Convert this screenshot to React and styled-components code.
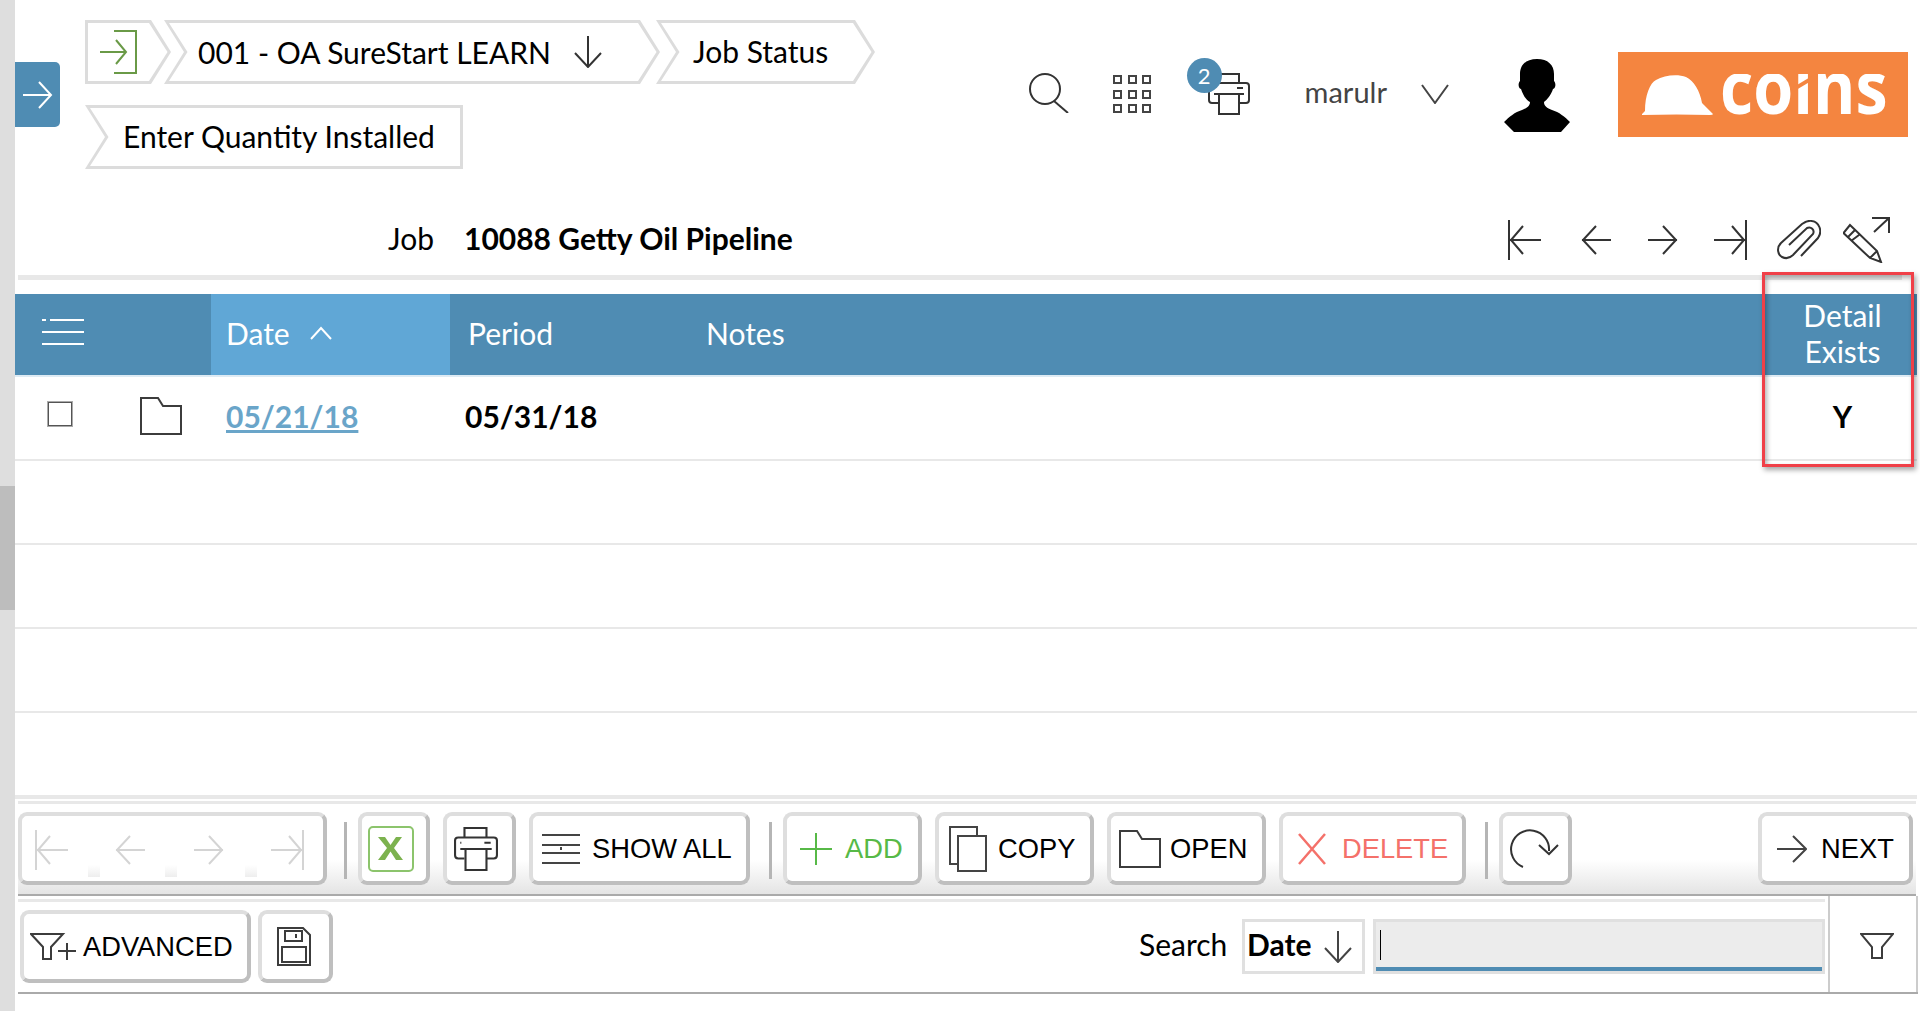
import React from 'react';
import styled, { createGlobalStyle, css } from 'styled-components';

const Global = createGlobalStyle`
  html, body { margin: 0; padding: 0; background: #fff; overflow: hidden; }
  body { font-family: Lato, "Open Sans", sans-serif; color: #000; }
  * { box-sizing: border-box; }
`;

const Page = styled.div`
  position: relative;
  width: 1920px;
  height: 1011px;
  padding-left: 15px;
  overflow: hidden;
`;

const Scrollbar = styled.div`
  position: absolute;
  left: 0;
  top: 0;
  bottom: 0;
  width: 15px;
  background: #dedede;
  &::after {
    content: '';
    position: absolute;
    left: 0;
    right: 0;
    top: 486px;
    height: 124px;
    background: #bdbdbd;
  }
`;

const SideTab = styled.div`
  position: absolute;
  left: 15px;
  top: 62px;
  width: 45px;
  height: 65px;
  background: #4f8cb3;
  border-radius: 0 5px 5px 0;
  display: flex;
  align-items: center;
  justify-content: center;
`;

const Header = styled.header`
  height: 160px;
  padding: 20px 12px 0 70px;
  display: flex;
  justify-content: space-between;
`;

const Crumbs = styled.nav`
  width: 820px;
  display: flex;
  flex-wrap: wrap;
  align-content: flex-start;
  row-gap: 21px;
`;

const shapes = {
  first: ['0 0, calc(100% - 20px) 0, 100% 50%, calc(100% - 20px) 100%, 0 100%', '3px 3px, calc(100% - 22px) 3px, calc(100% - 3.5px) 50%, calc(100% - 22px) calc(100% - 3px), 3px calc(100% - 3px)'],
  middle: ['0 0, calc(100% - 20px) 0, 100% 50%, calc(100% - 20px) 100%, 0 100%, 20px 50%', '5px 3px, calc(100% - 22px) 3px, calc(100% - 3.5px) 50%, calc(100% - 22px) calc(100% - 3px), 5px calc(100% - 3px), 23.5px 50%'],
  last: ['0 0, 100% 0, 100% 100%, 0 100%, 20px 50%', '5px 3px, calc(100% - 3px) 3px, calc(100% - 3px) calc(100% - 3px), 5px calc(100% - 3px), 23.5px 50%'],
};

const Crumb = styled.div`
  position: relative;
  height: 64px;
  width: ${(p) => p.$w}px;
  margin-left: ${(p) => p.$ml || 0}px;
  padding-left: ${(p) => p.$pl}px;
  padding-bottom: ${(p) => p.$pb || 0}px;
  display: flex;
  align-items: center;
  font-size: 30px;
  isolation: isolate;
  white-space: nowrap;
  &::before, &::after {
    content: '';
    position: absolute;
    inset: 0;
    z-index: -1;
  }
  &::before {
    background: #dcdcdc;
    clip-path: polygon(${(p) => shapes[p.$shape][0]});
  }
  &::after {
    background: #fff;
    clip-path: polygon(${(p) => shapes[p.$shape][1]});
  }
  svg { margin-left: ${(p) => p.$gap || 0}px; }
`;

const UserArea = styled.div`
  display: flex;
  align-items: flex-start;
  position: relative;
  height: 120px;
`;

const IconSlot = styled.div`
  display: flex;
  position: relative;
  margin-left: ${(p) => p.$ml}px;
  margin-top: ${(p) => p.$mt}px;
`;

const Badge = styled.span`
  position: absolute;
  left: -21px;
  top: -15px;
  width: 35px;
  height: 35px;
  border-radius: 50%;
  background: #4f8cb3;
  color: #fff;
  font-size: 22px;
  display: flex;
  align-items: center;
  justify-content: center;
`;

const UserName = styled.span`
  margin: 52px 0 0 55px;
  font-size: 29px;
  line-height: 40px;
  color: #444;
`;

const Logo = styled.div`
  width: 290px;
  height: 85px;
  margin: 32px 0 0 48px;
  background: #f48540;
  display: flex;
  align-items: center;
  padding-left: 24px;
`;

const LogoMark = styled.span`
  display: flex;
  margin-top: 1px;
`;

const LogoText = styled.span`
  position: relative;
  font-family: "Open Sans", sans-serif;
  font-size: 73px;
  font-weight: 700;
  color: #fff;
  line-height: 85px;
  margin: -18px 0 0 6px;
  transform: scaleX(0.885);
  transform-origin: left;
  clip-path: inset(31px 0 0 0);
  &::after {
    content: '';
    position: absolute;
    left: 80px;
    top: 38px;
    width: 30px;
    height: 4px;
    background: #f48540;
    transform: rotate(-28deg);
  }
`;

const JobRow = styled.div`
  height: 120px;
  margin: 0 18px 0 3px;
  padding-top: 40px;
  border-bottom: 5px solid #e8e8e8;
  display: flex;
  align-items: center;
  font-size: 30px;
`;

const JobLabel = styled.span`
  margin-left: 370px;
  width: 76px;
`;

const JobValue = styled.strong`
  font-weight: 700;
`;

const RecordIcons = styled.div`
  margin-left: auto;
  margin-right: 12px;
  margin-top: 4px;
  display: flex;
  align-items: center;
`;

const RecordSlot = styled.span`
  display: flex;
  margin-left: ${(p) => p.$ml || 0}px;
`;

const Table = styled.div`
  margin-top: 14px;
  width: 1902px;
`;

const columns = '196px 239px 240px 1fr 151px';

const HeadRow = styled.div`
  height: 81px;
  background: #4f8cb3;
  display: grid;
  grid-template-columns: ${columns};
  color: #fff;
  font-size: 30px;
`;

const HeadCell = styled.div`
  display: flex;
  align-items: center;
  padding-left: ${(p) => p.$pl || 0}px;
  padding-bottom: 4px;
  background: ${(p) => (p.$active ? '#60a7d6' : 'transparent')};
  ${(p) => p.$center && css`
    justify-content: center;
    padding-left: 2px;
    text-align: center;
    line-height: 36px;
  `}
  svg { margin-left: ${(p) => p.$iconGap || 0}px; }
`;

const BodyRow = styled.div`
  height: ${(p) => (p.$first || p.$last ? 86 : 84)}px;
  border-top: ${(p) => (p.$first ? '2px solid #deebf4' : '0')};
  border-bottom: ${(p) => (p.$last ? 4 : 2)}px solid #e8e8e8;
  padding-bottom: 5px;
  display: grid;
  grid-template-columns: ${columns};
  font-size: 30px;
  font-weight: 700;
  align-items: center;
`;

const SelectCell = styled.div`
  display: flex;
  align-items: center;
  padding-left: 32px;
  gap: 67px;
`;

const Check = styled.span`
  width: 26px;
  height: 26px;
  border: 2px solid #555;
  outline: 1px solid #aaa;
  outline-offset: -1px;
  margin-top: -4px;
`;

const DateLink = styled.a`
  color: #6aa5c9;
  text-decoration: underline;
  padding-left: 15px;
`;

const PeriodValue = styled.span`
  padding-left: 15px;
`;

const CenterValue = styled.span`
  grid-column: 5;
  padding-left: 2px;
  text-align: center;
`;

const Toolbar = styled.div`
  margin: 2px 4px 0 3px;
  border-top: 3px solid #e8e8e8;
  height: 95px;
  padding: 8px 3px 0 0;
  border-bottom: 2px solid #aaa;
  background: linear-gradient(#fff 0, #fff 56px, #e4e4e4 100%);
  display: flex;
  align-items: flex-start;
  gap: 13px;
`;

const Button = styled.button`
  height: 73px;
  width: ${(p) => p.$w}px;
  margin-left: ${(p) => p.$ml || 0}px;
  padding: 0 ${(p) => p.$pr || 0}px 0 ${(p) => p.$pl || 0}px;
  background: #fff;
  border: 4px solid #dedede;
  border-right-color: #bfbfbf;
  border-bottom-color: #bfbfbf;
  border-radius: 9px;
  font-family: "Liberation Sans", Arial, sans-serif;
  font-size: 27.3px;
  color: ${(p) => p.$color || '#000'};
  display: flex;
  align-items: center;
  justify-content: ${(p) => (p.$pl ? 'flex-start' : 'center')};
  gap: ${(p) => p.$gap || 0}px;
  white-space: nowrap;
`;

const NavGroup = styled(Button)`
  justify-content: space-between;
  padding: 3px 19px 0 13px;
  background-color: #fff;
  background-image:
    linear-gradient(#fff, #eee),
    linear-gradient(#fff, #eee),
    linear-gradient(#fff, #eee);
  background-size: 12px 12px;
  background-repeat: no-repeat;
  background-position: 66px 49px, 143px 49px, 223px 49px;
`;

const Divider = styled.span`
  width: 3px;
  height: 57px;
  background: #b5b5b5;
  margin: 10px -2px 0 ${(p) => p.$ml}px;
`;

const SearchBar = styled.div`
  margin: 0 2px 0 3px;
  height: 98px;
  border-bottom: 2px solid #aaa;
  display: flex;
`;

const SearchMain = styled.div`
  width: 1807px;
  margin-top: 3px;
  border-top: 3px solid #e8e8e8;
  display: flex;
  align-items: flex-start;
  padding: 8px 0 0 2px;
  gap: 7px;
`;

const SearchLabel = styled.span`
  font-size: 30px;
  margin: 16px 0 0 auto;
  width: 96px;
`;

const SelectBox = styled.div`
  width: 123px;
  height: 55px;
  margin-top: 9px;
  border: 3px solid #e0e0e0;
  display: flex;
  align-items: center;
  font-size: 30px;
  font-weight: 700;
  padding: 0 0 5px 2px;
  gap: 11px;
  svg { margin-top: 5px; }
`;

const SearchInput = styled.div`
  width: 452px;
  height: 55px;
  margin: 9px 0 0 1px;
  background: #ececec;
  border: 3px solid #e0e0e0;
  position: relative;
  box-shadow: inset 0 -4px 0 #4f8cb3;
  &::before {
    content: '';
    position: absolute;
    left: 4px;
    top: 8px;
    width: 1px;
    height: 30px;
    background: #000;
  }
`;

const FilterCell = styled.div`
  width: 90px;
  margin-left: 3px;
  padding: 3px 0 0 8px;
  border-left: 2px solid #ccc;
  border-right: 2px solid #ccc;
  display: flex;
  align-items: center;
  justify-content: center;
`;

const Highlight = styled.div`
  position: absolute;
  left: 1762px;
  top: 272px;
  width: 152px;
  height: 195px;
  border: 3px solid #f04048;
  box-shadow: 2px 3px 5px rgba(0, 0, 0, 0.35), inset 2px 3px 5px rgba(0, 0, 0, 0.3);
  pointer-events: none;
`;

const Line = ({ w = 40, h = 40, children, color = '#333', sw = 2 }) => (
  <svg width={w} height={h} viewBox={`0 0 ${w} ${h}`} fill="none" stroke={color} strokeWidth={sw}>
    {children}
  </svg>
);

const FirstIcon = ({ color, w = 33, h = 40 }) => (
  <Line w={w} h={h} color={color}>
    <path d={`M1 0V${h}M2 ${h / 2}H${w}M15 ${h / 2 - 14}L3 ${h / 2}L15 ${h / 2 + 14}`} />
  </Line>
);
const PrevIcon = ({ color }) => (
  <Line w={32} h={30} color={color}>
    <path d="M2 15H31M16 1L3 15L16 29" />
  </Line>
);
const NextIcon = ({ color }) => (
  <Line w={32} h={30} color={color}>
    <path d="M1 15H30M16 1L29 15L16 29" />
  </Line>
);
const LastIcon = ({ color, w = 33, h = 40 }) => (
  <Line w={w} h={h} color={color}>
    <path d={`M${w - 1} 0V${h}M0 ${h / 2}H${w - 2}M${w - 15} ${h / 2 - 14}L${w - 3} ${h / 2}L${w - 15} ${h / 2 + 14}`} />
  </Line>
);

const PrinterIcon = ({ w = 42, h = 42 }) => (
  <svg width={w} height={h} viewBox="0 0 42 42" fill="none" stroke="#333" strokeWidth="2">
    <path d="M10 10V1H31V10" />
    <path d="M10 30H4Q1 30 1 27V13Q1 10 4 10H38Q41 10 41 13V27Q41 30 38 30H31" />
    <path d="M6 21H36M11 21V41H31V21" />
    <path d="M29 15H35M6 15H7" />
  </svg>
);

const FolderIcon = ({ w = 42, h = 38 }) => (
  <svg width={w} height={h} viewBox="0 0 42 38" fill="none" stroke="#3c3c3c" strokeWidth="2">
    <path d="M1 1H18L23 9H41V37H1Z" />
  </svg>
);

const FunnelIcon = () => (
  <svg width="34" height="26" viewBox="0 0 34 26" fill="none" stroke="#3c3c3c" strokeWidth="2">
    <path d="M1 1H33L22 14V25H12V14Z" />
  </svg>
);

const HardHat = () => (
  <svg width="72" height="41" viewBox="0 0 72 41" fill="#fff">
    <path d="M0 39L3 36C3 20 8 8 14 5C22 0 36 -1 44 2C52 6 58 16 60 28L71 39Q71 40 68 40Q35 39 0 40Z" />
  </svg>
);

const Silhouette = () => (
  <svg width="66" height="73" viewBox="0 0 66 73" fill="#000">
    <path d="M33 0C44 0 50 6 50 15L50 22C52 24 52 29 49 30C47 36 43 41 40 43C40 47 43 49 48 51C55 53 61 58 66 63L57 73H10L0 63C5 58 11 53 18 51C23 49 26 47 26 43C22 41 19 36 17 30C14 29 14 24 16 22L16 15C16 6 22 0 33 0Z" />
  </svg>
);

export default function App() {
  return (
    <Page>
      <Global />
      <Scrollbar />
      <SideTab>
        <Line w={30} h={28} color="#fff"><path d="M0 14H28M16 1L28 14L16 27" /></Line>
      </SideTab>

      <Header>
        <Crumbs>
          <Crumb $shape="first" $w={86} $pl={14}>
            <svg width="39" height="44" viewBox="0 0 39 44" fill="none" stroke="#6a9a47" strokeWidth="2">
              <path d="M15 1H37V43H15M1 22H27M17 10L27 22L17 34" />
            </svg>
          </Crumb>
          <Crumb $shape="middle" $w={496} $ml={-7} $pl={34} $gap={22}>
            001 - OA SureStart LEARN
            <Line w={30} h={32} color="#333"><path d="M15 0V30M2 17L15 31L28 17" /></Line>
          </Crumb>
          <Crumb $shape="middle" $w={219} $ml={-4} $pl={37} $pb={2}>Job Status</Crumb>
          <Crumb $shape="last" $w={378} $pl={38} $pb={3}>Enter Quantity Installed</Crumb>
        </Crumbs>

        <UserArea>
          <IconSlot $ml={0} $mt={53}>
            <svg width="40" height="40" viewBox="0 0 40 40" fill="none" stroke="#333" strokeWidth="2">
              <ellipse cx="16" cy="16" rx="15" ry="15" /><path d="M25 28L39 40" />
            </svg>
          </IconSlot>
          <IconSlot $ml={44} $mt={55}>
            <svg width="38" height="38" viewBox="0 0 38 38" fill="none" stroke="#444" strokeWidth="2">
              {[0, 15, 29].map((y) => [0, 15, 29].map((x) => (
                <rect key={`${x}-${y}`} x={x + 1} y={y + 1} width="7" height="7" />
              )))}
            </svg>
          </IconSlot>
          <IconSlot $ml={57} $mt={53}>
            <Badge>2</Badge>
            <PrinterIcon />
          </IconSlot>
          <UserName>marulr</UserName>
          <IconSlot $ml={34} $mt={64}>
            <Line w={28} h={20} color="#444"><path d="M1 1L14 19L27 1" /></Line>
          </IconSlot>
          <IconSlot $ml={55} $mt={39}><Silhouette /></IconSlot>
          <Logo>
            <LogoMark><HardHat /></LogoMark>
            <LogoText>coins</LogoText>
          </Logo>
        </UserArea>
      </Header>

      <JobRow>
        <JobLabel>Job</JobLabel>
        <JobValue>10088 Getty Oil Pipeline</JobValue>
        <RecordIcons>
          <FirstIcon />
          <RecordSlot $ml={39}><PrevIcon /></RecordSlot>
          <RecordSlot $ml={35}><NextIcon /></RecordSlot>
          <RecordSlot $ml={35}><LastIcon /></RecordSlot>
          <RecordSlot $ml={30}>
            <svg width="44" height="40" viewBox="0 0 44 40" fill="none" stroke="#333" strokeWidth="2">
              <path d="M24 36L41 18C46 11 42 2 35 1C31 0 28 2 25 4L4 23C-1 28 1 35 5 37C9 39 13 38 16 35L36 14C38 10 34 6 30 8L12 25" />
            </svg>
          </RecordSlot>
          <RecordSlot $ml={22}>
            <svg width="47" height="46" viewBox="0 0 47 46" fill="none" stroke="#333" strokeWidth="2">
              <path d="M7 8L0.5 16L27 41L38 45L34 34ZM34 34L27 41M12 13L5 20M16 18L8 24M29 1H46V16M46 1L31 15" />
            </svg>
          </RecordSlot>
        </RecordIcons>
      </JobRow>

      <Table>
        <HeadRow>
          <HeadCell $pl={27}>
            <Line w={42} h={27} color="#fff"><path d="M0 1H4M8 1H42M0 13H42M0 25H42" /></Line>
          </HeadCell>
          <HeadCell $active $pl={15} $iconGap={20}>
            Date
            <Line w={22} h={14} color="#fff"><path d="M1 13L11 2L21 13" /></Line>
          </HeadCell>
          <HeadCell $pl={18}>Period</HeadCell>
          <HeadCell $pl={16}>Notes</HeadCell>
          <HeadCell $center>Detail<br />Exists</HeadCell>
        </HeadRow>
        <BodyRow $first>
          <SelectCell>
            <Check />
            <FolderIcon />
          </SelectCell>
          <DateLink>05/21/18</DateLink>
          <PeriodValue>05/31/18</PeriodValue>
          <CenterValue>Y</CenterValue>
        </BodyRow>
        <BodyRow />
        <BodyRow />
        <BodyRow />
        <BodyRow $last />
      </Table>

      <Toolbar>
        <NavGroup $w={309}>
          <FirstIcon color="#d4d4d4" />
          <PrevIcon color="#d4d4d4" />
          <NextIcon color="#d4d4d4" />
          <LastIcon color="#d4d4d4" />
        </NavGroup>
        <Divider $ml={4} />
        <Button $w={72} $pr={7}>
          <svg width="46" height="46" viewBox="0 0 46 46">
            <rect x="1" y="1" width="44" height="44" rx="4" fill="none" stroke="#8cc46c" strokeWidth="2" />
            <path d="M10 11H17L22.5 19L28 11H34L26 22L35 34H28L22.5 25.5L17 34H10L19 22Z" fill="#7cb24e" />
          </svg>
        </Button>
        <Button $w={73} $pr={7}><PrinterIcon w={44} h={46} /></Button>
        <Button $w={221} $pl={9} $gap={12}>
          <Line w={38} h={30} color="#444"><path d="M0 1H38M0 11H38M19 13V16M0 19H38M0 29H38" /></Line>
          SHOW ALL
        </Button>
        <Divider $ml={6} />
        <Button $w={139} $pl={13} $gap={13} $color="#57b947">
          <Line w={32} h={32} color="#57b947"><path d="M16 0V32M0 16H32" /></Line>
          ADD
        </Button>
        <Button $w={159} $pl={10} $gap={11}>
          <svg width="38" height="46" viewBox="0 0 38 46" fill="none" stroke="#444" strokeWidth="2">
            <path d="M8 38H1V1H28V10" /><rect x="9" y="10" width="28" height="35" fill="#fff" />
          </svg>
          COPY
        </Button>
        <Button $w={159} $pl={8} $gap={9}><FolderIcon />OPEN</Button>
        <Button $w={187} $pl={15} $gap={16} $color="#f4716a">
          <Line w={28} h={32} color="#f4716a" sw={2.5}><path d="M1 1L27 31M27 1L1 31" /></Line>
          DELETE
        </Button>
        <Divider $ml={6} />
        <Button $w={73} $pr={4}>
          <svg width="50" height="42" viewBox="0 0 50 42" fill="none" stroke="#333" strokeWidth="2">
            <path d="M14 39A19 19 0 1 1 40 23M30 17L40 26L49 17" />
          </svg>
        </Button>
        <Button $w={155} $ml={173} $pl={15} $gap={14}>
          <Line w={30} h={28} color="#444"><path d="M0 14H29M16 1L29 14L16 27" /></Line>
          NEXT
        </Button>
      </Toolbar>

      <SearchBar>
        <SearchMain>
          <Button $w={231} $pl={6} $gap={6}>
            <svg width="47" height="28" viewBox="0 0 47 28" fill="none" stroke="#3c3c3c" strokeWidth="2">
              <path d="M1 1H33L21 14V26H13V14ZM28 18H46M37 10V27" />
            </svg>
            ADVANCED
          </Button>
          <Button $w={75} $pr={4}>
            <svg width="34" height="39" viewBox="0 0 34 39" fill="none" stroke="#3c3c3c" strokeWidth="2">
              <path d="M1 1H26L33 8V38H1ZM8 4H25V14H8ZM19 7V11M5 20H29V35H5Z" />
            </svg>
          </Button>
          <SearchLabel>Search</SearchLabel>
          <SelectBox>
            Date
            <Line w={30} h={32} color="#444"><path d="M15 0V30M2 17L15 31L28 17" /></Line>
          </SelectBox>
          <SearchInput />
        </SearchMain>
        <FilterCell><FunnelIcon /></FilterCell>
      </SearchBar>

      <Highlight />
    </Page>
  );
}
